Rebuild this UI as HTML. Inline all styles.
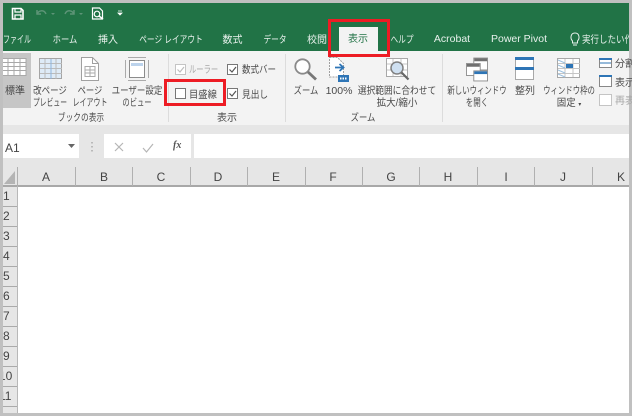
<!DOCTYPE html>
<html lang="ja"><head><meta charset="utf-8">
<style>
html,body{margin:0;padding:0;background:#c0c0c0}
#r{position:relative;width:632px;height:416px;overflow:hidden;background:#c0c0c0;font-family:"Liberation Sans","Noto Sans CJK JP",sans-serif;color:#4a4a4a;filter:blur(.35px)}
#r div{position:absolute}
.t{white-space:nowrap;font-size:10px;line-height:13px;text-align:center;transform:translateX(-50%) scaleX(var(--s,1))}
.tab{white-space:nowrap;font-size:10px;line-height:14px;color:#e8f1ec;top:34px;transform:translateX(-50%) scaleX(var(--s,1))}
.l{white-space:nowrap;font-size:10px;line-height:13px;transform-origin:0 50%;transform:scaleX(var(--s,1))}
.cb{width:9px;height:9px;border:1px solid #777;background:#fff;box-sizing:content-box}
.sep{width:1px;background:#dcdcdc;top:54px;height:68px}
.ch{top:170px;font-size:12px;line-height:14px;color:#444;transform:translateX(-50%)}
.cs{top:167px;width:1px;height:19px;background:#b0b0b0}
.rn{left:3px;font-size:12px;line-height:14px;color:#444;white-space:nowrap}
.rl{left:3px;width:14px;height:1px;background:#aaa}
svg{position:absolute;overflow:visible}
</style></head><body>
<div id="r">
<div style="left:3px;top:3px;width:626px;height:410px;background:#fff"></div>
<div style="left:3px;top:3px;width:626px;height:48px;background:#217346"></div>
<div style="left:3px;top:51px;width:626px;height:74px;background:#f3f3f3"></div>
<div style="left:3px;top:125px;width:626px;height:43px;background:#e6e6e6"></div>
<div style="left:3px;top:168px;width:626px;height:18px;background:#e6e6e6"></div>
<div style="left:3px;top:186px;width:14px;height:227px;background:#e6e6e6"></div>

<!-- QAT -->
<svg style="left:0;top:0" width="140" height="30" viewBox="0 0 140 30" fill="none">
<path d="M12.500 8.500h8.500l2 2v8.500h-10.500z" stroke="#fff" stroke-width="1.600"/>
<path d="M15 9v3h6V9M15 19v-4h6v4" stroke="#fff" stroke-width="1.200"/>
<path d="M37 14c2-4 7-4.500 9 0M37 10v4h4" stroke="#5d9477" stroke-width="1.500"/>
<path d="M51 13h4l-2 2z" fill="#5d9477"/>
<path d="M74 14c-2-4-7-4.500-9 0M74 10v4h-4" stroke="#5d9477" stroke-width="1.500"/>
<path d="M79 13h4l-2 2z" fill="#5d9477"/>
<path d="M92.500 8h7l3 3v8h-10z" stroke="#fff" stroke-width="1.200"/>
<circle cx="97" cy="14" r="2.800" stroke="#fff" stroke-width="1.200"/>
<path d="M99 16l4 3" stroke="#fff" stroke-width="1.500"/>
<path d="M118 11h4M118 13h4l-2 2z" stroke="#fff" stroke-width=".8" fill="#fff"/>
</svg>

<!-- Tabs -->
<div class="tab" style="left:17px;--s:.7">ファイル</div>
<div class="tab" style="left:64.500px;--s:.83">ホーム</div>
<div class="tab" style="left:108px">挿入</div>
<div class="tab" style="left:170.500px;--s:.77">ページ レイアウト</div>
<div class="tab" style="left:232.500px">数式</div>
<div class="tab" style="left:274.500px;--s:.77">データ</div>
<div class="tab" style="left:317px">校閲</div>
<div style="left:339px;top:27px;width:39px;height:24px;background:#f3f3f3"></div>
<div class="tab" style="left:358px;color:#217346;top:33px">表示</div>
<div class="tab" style="left:401.500px;--s:.77">ヘルプ</div>
<div class="tab" style="left:452px;font-size:10.500px;top:32px">Acrobat</div>
<div class="tab" style="left:519px;font-size:10.500px;top:32px">Power Pivot</div>
<svg style="left:568px;top:32px" width="14" height="14" viewBox="0 0 14 14" fill="none" stroke="#e8f1ec" stroke-width="1"><path d="M4.500 9C2 6.500 2.500 1 7 1s5 5.500 2.500 8v2h-5zM5 13h4"/></svg>
<div class="tab" style="left:582px;transform-origin:0 50%;transform:scaleX(.85)">実行したい作業</div>
<div style="left:629px;top:0;width:3px;height:416px;background:#c0c0c0"></div>

<!-- Ribbon: ブックの表示 -->
<div style="left:3px;top:53px;width:28px;height:55px;background:#c6c6c6"></div>
<svg style="left:3px;top:58px" width="24" height="18" viewBox="0 0 24 18"><path d="M0 .5h23v17H0M0 4.500h23M0 8.500h23M0 12.500h23M5 0v18M11 0v18M17 0v18" stroke="#a8a8a8" fill="#fff" stroke-width="1"/></svg>
<div class="t" style="left:15px;top:85px">標準</div>
<svg style="left:39px;top:58px" width="24" height="21" viewBox="0 0 24 21"><rect x=".5" y=".5" width="22" height="20" fill="#deebf7" stroke="#a5a5a5"/><path d="M1 5.500h22M1 10.500h22M1 15.500h22M6 1v20M17 1v20" stroke="#bbb" fill="none"/><path d="M12 1v20" stroke="#8fb4dc"/></svg>
<div class="t" style="left:50px;top:85px;--s:.85">改ページ</div>
<div class="t" style="left:50px;top:97px;--s:.68">プレビュー</div>
<svg style="left:81px;top:57px" width="18" height="24" viewBox="0 0 18 24" fill="#fff" stroke="#a0a0a0"><path d="M.5.500h11l6 6v17H.5z"/><path d="M11.500.500v6h6" fill="none"/><path d="M4 9.500h10v10H4zM4 13h10M4 16h10M9 9.500v10" fill="none" stroke="#aaa"/></svg>
<div class="t" style="left:90px;top:85px;--s:.83">ページ</div>
<div class="t" style="left:90px;top:97px;--s:.7">レイアウト</div>
<svg style="left:125px;top:57px" width="24" height="24" viewBox="0 0 24 24" fill="none" stroke="#8c8c8c"><path d="M.5 3v18M3 .5h18M3 23.500h18M23.500 3v18" stroke="#aaa"/><rect x="4.500" y="3.500" width="15" height="17" fill="#fff"/><rect x="6" y="6" width="12" height="3" fill="#bcd3ec" stroke="none"/></svg>
<div class="t" style="left:136.500px;top:85px;--s:.85">ユーザー設定</div>
<div class="t" style="left:136.500px;top:97px;--s:.73">のビュー</div>
<div class="t" style="left:81px;top:112px;--s:.77">ブックの表示</div>
<div class="sep" style="left:168px"></div>

<!-- 表示 group -->
<div class="cb" style="left:175px;top:64px;border-color:#c4c4c4"></div>
<svg style="left:175px;top:64px" width="11" height="11" fill="none"><path d="M2.500 5.500l2.500 2.500 4-5" stroke="#bdbdbd" stroke-width="1.200"/></svg>
<div class="l" style="left:189px;top:64px;color:#a8a8a8;--s:.73">ルーラー</div>
<div class="cb" style="left:227px;top:64px"></div>
<svg style="left:227px;top:64px" width="11" height="11" fill="none"><path d="M2.500 5.500l2.500 2.500 4-5" stroke="#555" stroke-width="1.200"/></svg>
<div class="l" style="left:242px;top:64px;--s:.85">数式バー</div>
<div class="cb" style="left:175px;top:88px"></div>
<div class="l" style="left:189px;top:89px;--s:.93">目盛線</div>
<div class="cb" style="left:227px;top:88px"></div>
<svg style="left:227px;top:88px" width="11" height="11" fill="none"><path d="M2.500 5.500l2.500 2.500 4-5" stroke="#555" stroke-width="1.200"/></svg>
<div class="l" style="left:242px;top:89px;--s:.87">見出し</div>
<div class="t" style="left:227px;top:112px">表示</div>
<div class="sep" style="left:285px"></div>

<!-- ズーム -->
<svg style="left:294px;top:58px" width="23" height="22" viewBox="0 0 23 22" fill="none"><circle cx="8.500" cy="8.500" r="7.200" stroke="#8a8a8a" stroke-width="1.800" fill="#fff"/><path d="M14 14l8 7.500" stroke="#777" stroke-width="2.800"/></svg>
<div class="t" style="left:306px;top:85px;--s:.83">ズーム</div>
<svg style="left:329px;top:57px" width="21" height="25" viewBox="0 0 21 25" fill="#fff"><path d="M.5.500h8l6 6V20H.5z" stroke="#a0a0a0" stroke-dasharray="2 1"/><path d="M6 10.500h8M10.500 7l4 3.500-4 3.500" stroke="#2e75b6" stroke-width="1.800" fill="none"/><rect x="9" y="18" width="11" height="7" fill="#2e75b6"/><path d="M11 21.500h7" stroke="#fff" stroke-width="2" stroke-dasharray="1.500 1"/></svg>
<div class="t" style="left:339px;top:85px;font-size:10.500px">100%</div>
<svg style="left:386px;top:58px" width="25" height="24" viewBox="0 0 25 24" fill="none"><rect x=".5" y=".5" width="21" height="18" fill="#fff" stroke="#a8a8a8"/><path d="M1 6h20M1 12h20M7 1v17M15 1v17" stroke="#c5c5c5"/><circle cx="11" cy="10" r="6" fill="#cfe0f1" stroke="#808080" stroke-width="1.500"/><path d="M15.500 14.500l7 7" stroke="#666" stroke-width="2.200"/></svg>
<div class="t" style="left:397px;top:85px;--s:.87">選択範囲に合わせて</div>
<div class="t" style="left:397px;top:97px;--s:.95">拡大/縮小</div>
<div class="t" style="left:363px;top:112px;--s:.83">ズーム</div>
<div class="sep" style="left:442px"></div>

<!-- ウィンドウ -->
<svg style="left:466px;top:57px" width="22" height="25" viewBox="0 0 24 26" fill="#fff" stroke="#8c8c8c"><rect x="8.500" y=".5" width="15" height="13"/><rect x="9" y="1" width="14" height="3" fill="#707070" stroke="none"/><rect x=".5" y="6.500" width="15" height="13"/><rect x="1" y="7" width="14" height="3" fill="#707070" stroke="none"/><rect x="8.500" y="14.500" width="15" height="11"/><rect x="9" y="15" width="14" height="3" fill="#2e75b6" stroke="none"/></svg>
<div class="t" style="left:476.500px;top:85px;--s:.74">新しいウィンドウ</div>
<div class="t" style="left:477px;top:97px;--s:.75">を開く</div>
<svg style="left:515px;top:57px" width="19" height="23" viewBox="0 0 19 23" fill="#fff" stroke="#a8a8a8"><rect x=".5" y=".5" width="18" height="22"/><rect x="0" y="0" width="19" height="3" fill="#2e75b6" stroke="none"/><rect x="0" y="10" width="19" height="3" fill="#2e75b6" stroke="none"/></svg>
<div class="t" style="left:525px;top:85px">整列</div>
<svg style="left:557px;top:58px" width="23" height="20" viewBox="0 0 23 20" fill="#fff" stroke="#a8a8a8"><rect x=".5" y=".5" width="22" height="19"/><path d="M1 5.500h22M1 10.500h22M1 15.500h22M8 1v18M16 1v18" stroke="#c5c5c5"/><path d="M1 2l7 3M1 7l7 3M1 12l7 3M1 16l7 3" stroke="#9cc0e0"/><rect x="9" y="6" width="7" height="4" fill="#2e75b6" stroke="none"/></svg>
<div class="t" style="left:569px;top:85px;--s:.74">ウィンドウ枠の</div>
<div class="t" style="left:569px;top:97px;--s:.95">固定 <span style="font-size:6px">▾</span></div>
<svg style="left:599px;top:58px" width="13" height="48" viewBox="0 0 13 48" fill="#fff"><rect x=".5" y=".5" width="12" height="9" stroke="#888"/><rect x="0" y="0" width="13" height="2" fill="#2e75b6"/><path d="M1 5h11" stroke="#2e75b6"/><rect x=".5" y="17.500" width="12" height="11" stroke="#888"/><rect x="0" y="17" width="13" height="2" fill="#2e75b6"/><rect x=".5" y="36.500" width="12" height="11" stroke="#c4c4c4"/></svg>
<div class="l" style="left:615px;top:58px">分割</div>
<div class="l" style="left:615px;top:77px">表示</div>
<div class="l" style="left:615px;top:95px;color:#a8a8a8">再表示</div>

<!-- Formula bar -->
<div style="left:3px;top:134px;width:76px;height:24px;background:#fff"></div>
<div style="left:5px;top:141px;font-size:12px;line-height:14px;color:#444">A1</div>
<svg style="left:68px;top:144px" width="8" height="5"><path d="M0 0h7l-3.500 4z" fill="#666"/></svg>
<svg style="left:91px;top:141px" width="3" height="12"><path d="M1 1v1.500M1 5v1.500M1 9v1.500" stroke="#aaa" stroke-width="1.500"/></svg>
<div style="left:104px;top:134px;width:87px;height:24px;background:#fff"></div>
<svg style="left:113px;top:141px" width="70" height="13" fill="none"><path d="M2 2l8 8M10 2l-8 8" stroke="#b5b5b5" stroke-width="1.200"/><path d="M30 7l3.500 4 6.500-8" stroke="#b5b5b5" stroke-width="1.200"/></svg>
<div style="left:173px;top:139px;font:italic bold 10px/14px 'Liberation Serif',serif;color:#555">fx</div>
<div style="left:194px;top:134px;width:435px;height:24px;background:#fff"></div>

<!-- Column headers -->
<svg style="left:4px;top:171px" width="12" height="14"><path d="M11 0v13H0z" fill="#b4b4b4"/></svg>
<div style="left:3px;top:185px;width:626px;height:1.500px;background:#a8a8a8"></div>
<div class="cs" style="left:17px"></div><div class="cs" style="left:75px"></div><div class="cs" style="left:132px"></div><div class="cs" style="left:190px"></div><div class="cs" style="left:247px"></div><div class="cs" style="left:305px"></div><div class="cs" style="left:362px"></div><div class="cs" style="left:419px"></div><div class="cs" style="left:477px"></div><div class="cs" style="left:534px"></div><div class="cs" style="left:592px"></div>
<div class="ch" style="left:46px">A</div><div class="ch" style="left:104px">B</div><div class="ch" style="left:161px">C</div><div class="ch" style="left:218px">D</div><div class="ch" style="left:276px">E</div><div class="ch" style="left:333px">F</div><div class="ch" style="left:391px">G</div><div class="ch" style="left:448px">H</div><div class="ch" style="left:506px">I</div><div class="ch" style="left:563px">J</div><div class="ch" style="left:621px">K</div>

<!-- Row headers -->
<div class="rn" style="top:189px">1</div><div class="rl" style="top:206px"></div>
<div class="rn" style="top:209px">2</div><div class="rl" style="top:226px"></div>
<div class="rn" style="top:229px">3</div><div class="rl" style="top:246px"></div>
<div class="rn" style="top:249px">4</div><div class="rl" style="top:266px"></div>
<div class="rn" style="top:269px">5</div><div class="rl" style="top:286px"></div>
<div class="rn" style="top:289px">6</div><div class="rl" style="top:306px"></div>
<div class="rn" style="top:309px">7</div><div class="rl" style="top:326px"></div>
<div class="rn" style="top:329px">8</div><div class="rl" style="top:346px"></div>
<div class="rn" style="top:349px">9</div><div class="rl" style="top:366px"></div>
<div class="rn" style="top:369px;left:-1px">10</div><div class="rl" style="top:386px"></div>
<div class="rn" style="top:389px;left:-1px">11</div><div class="rl" style="top:406px"></div>
<div style="left:17px;top:186px;width:1px;height:227px;background:#b8b8b8"></div>

<!-- Outer border overlay -->
<div style="left:0;top:0;width:3px;height:416px;background:#c0c0c0"></div>
<div style="left:0;top:0;width:632px;height:3px;background:#c0c0c0"></div>
<div style="left:0;top:413px;width:632px;height:3px;background:#c0c0c0"></div>

<!-- Red highlights -->
<div style="left:164px;top:79px;width:62px;height:27px;box-sizing:border-box;border:3px solid #ed1c24"></div>
<div style="left:328px;top:19px;width:62px;height:38px;box-sizing:border-box;border:3px solid #ed1c24"></div>
</div>
</body></html>
